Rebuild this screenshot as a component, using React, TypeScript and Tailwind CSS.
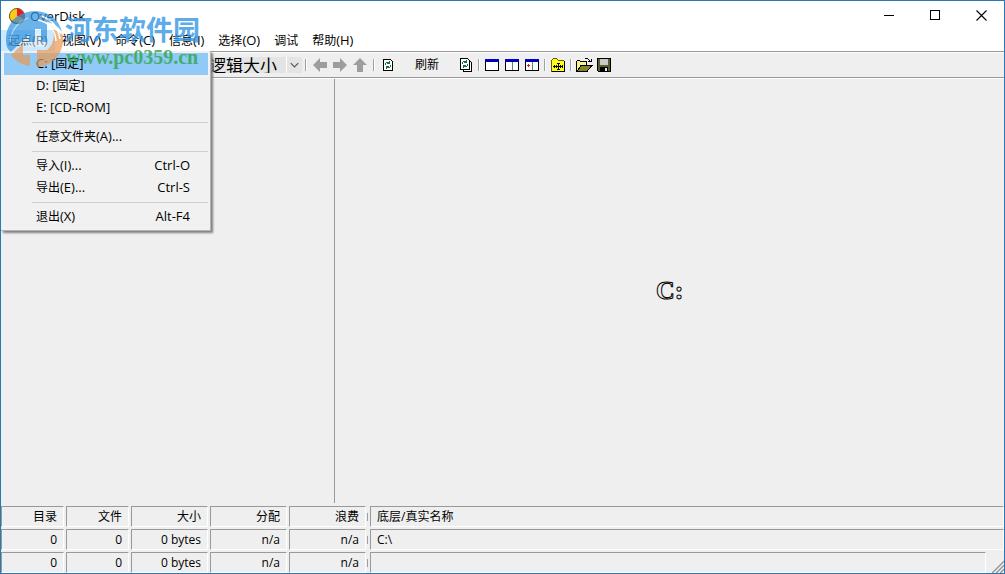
import React from 'react';

const drives = ['C: [固定]', 'D: [固定]', 'E: [CD-ROM]'];
const menus = ['起点(R)', '视图(V)', '命令(C)', '信息(I)', '选择(O)', '调试', '帮助(H)'];

function DiskLogo() {
  return (
    <svg width="18" height="18" viewBox="0 0 18 18" aria-hidden="true">
      <circle cx="9" cy="9" r="7.6" fill="#f8cc18" stroke="#7d5a16" />
      <path d="M9 9V1.5A7.5 7.5 0 0 1 15.5 12Z" fill="#e51f24" />
      <path d="M9 9 15.5 12A7.5 7.5 0 0 1 3.5 14Z" fill="#f5a51c" />
      <path d="M3.5 14A7.6 7.6 0 0 0 16.4 10.8" fill="none" stroke="#4a2a18" strokeWidth="1.2" />
    </svg>
  );
}

function Arrow({ direction }: { direction: 'left' | 'right' | 'up' }) {
  const d = {
    left: 'M3 10 10 3V7H17V13H10V17Z',
    right: 'M17 10 10 3V7H3V13H10V17Z',
    up: 'M10 3 17 10H13V17H7V10H3Z',
  }[direction];
  return (
    <svg width="20" height="20" viewBox="0 0 20 20" aria-hidden="true">
      <path d={d} fill="#9d9d9d" />
    </svg>
  );
}

function RefreshMarks() {
  return (
    <g fill="#16743a">
      <path d="M7 8H8V7H11V6H12V9H9V8H8V10H7Z" />
      <path d="M13 12H12V13H9V14H8V11H11V12H12V10H13Z" />
    </g>
  );
}

function RefreshPage() {
  return (
    <svg width="20" height="20" viewBox="0 0 20 20" shapeRendering="crispEdges" aria-hidden="true">
      <path d="M5.5 4.5H12.5L14.5 6.5V15.5H5.5Z" fill="#fff" stroke="#000" />
      <RefreshMarks />
    </svg>
  );
}

function RefreshPages() {
  return (
    <svg width="20" height="20" viewBox="0 0 20 20" shapeRendering="crispEdges" aria-hidden="true">
      <path d="M7.5 5.5H13.5L15.5 7.5V16.5H7.5Z" fill="#fff" stroke="#000" />
      <path d="M4.5 3.5H11.5L13.5 5.5V14.5H4.5Z" fill="#fff" stroke="#000" />
      <g transform="translate(-1 -1)">
        <RefreshMarks />
      </g>
    </svg>
  );
}

function Pane({ split, plus }: { split?: boolean; plus?: boolean }) {
  return (
    <svg width="20" height="20" viewBox="0 0 20 20" shapeRendering="crispEdges" aria-hidden="true">
      <path d="M3.5 4.5H16.5V15.5H3.5Z" fill="#fff" stroke="#000" />
      <path d="M3 4H17V7H3Z" fill="#0000b4" />
      {split && <path d="M10.5 7V15" stroke="#4c8a72" />}
      {plus && <path d="M5 10.5H8M6.5 9V12" stroke="#e01818" />}
    </svg>
  );
}

function MoveFolder() {
  return (
    <svg width="20" height="20" viewBox="0 0 20 20" shapeRendering="crispEdges" aria-hidden="true">
      <path d="M3.5 5.5 5.5 3.5H8.5L10.5 5.5H15.5L16.5 6.5V16.5H3.5Z" fill="#ffff1c" stroke="#5e5e00" />
      <path d="M16.5 6V16.5H4" fill="none" stroke="#000" />
      <path d="M5 11.5H15M10.5 8V15" stroke="#000" fill="none" />
      <path d="M9 8H12V9H9ZM9 14H12V15H9ZM6 10H7V13H6ZM14 10H15V13H14ZM8 10H9V13H8ZM12 10H13V13H12Z" fill="#000" />
    </svg>
  );
}

function OpenFolder() {
  return (
    <svg width="20" height="20" viewBox="0 0 20 20" shapeRendering="crispEdges" aria-hidden="true">
      <path d="M2.5 16.5V6.5L3.5 5.5H5.5L6.5 6.5H12.5V9.5" fill="#f5f58c" stroke="#000" />
      <path d="M3 16.5 7 10.5H18L13 16.5Z" fill="#84842a" stroke="#000" />
      <path d="M10.5 4.5 11.5 3.5H13.5L16.5 6.5M14 6.5H17.5V4" fill="none" stroke="#000" />
    </svg>
  );
}

function Floppy() {
  return (
    <svg width="20" height="20" viewBox="0 0 20 20" shapeRendering="crispEdges" aria-hidden="true">
      <path d="M3.5 3.5H16.5V16.5H4.5L3.5 15.5Z" fill="#5c5c2c" stroke="#000" />
      <path d="M6 4H14V10H6Z" fill="#c8c8c8" />
      <path d="M6 12H14V16H6Z" fill="#000" />
      <path d="M11 13H13V16H11Z" fill="#e8e8e8" />
    </svg>
  );
}

function Label({ text }: { text: string }) {
  const runs = text.match(/[\u4e00-\u9fff]+|[^\u4e00-\u9fff]+/g) ?? [];
  return (
    <span className="whitespace-pre">
      {runs.map((run, i) => (
        <span key={i} className={/[\u4e00-\u9fff]/.test(run) ? 'text-[12px]' : 'text-[13px]'}>
          {run}
        </span>
      ))}
    </span>
  );
}

function Tool({ label, children }: { label: string; children: React.ReactNode }) {
  return (
    <button type="button" aria-label={label} className="flex h-5 w-5 shrink-0 items-center justify-center">
      {children}
    </button>
  );
}

function Rule({ tight }: { tight?: boolean }) {
  return <span className={`h-3 w-[2px] shrink-0 border-l border-[#a0a0a0] bg-white ${tight ? 'mx-[2px]' : 'mx-[3px]'}`} />;
}

function Entry({ label, keys, active }: { label: string; keys?: string; active?: boolean }) {
  return (
    <button
      type="button"
      role="menuitem"
      className={`flex h-[22px] w-full items-center justify-between pr-[18px] pb-[2px] pl-8 ${active ? 'bg-[#91c9f7]' : ''}`}
    >
      <Label text={label} />
      {keys && <Label text={keys} />}
    </button>
  );
}

function MenuRule() {
  return <div role="separator" className="my-[3px] ml-7 h-px bg-[#d0d0d0]" />;
}

function StartMenu() {
  return (
    <div
      role="menu"
      className="absolute top-full left-0 z-10 w-[210px] border-r border-b border-[#b4b4b4] bg-[#f1f1f1] py-[2px] pr-[2px] pl-[3px] shadow-[2px_2px_2px_#808080]"
    >
      {drives.map((d, i) => (
        <Entry key={d} label={d} active={i === 0} />
      ))}
      <MenuRule />
      <Entry label="任意文件夹(A)..." />
      <MenuRule />
      <Entry label="导入(I)..." keys="Ctrl-O" />
      <Entry label="导出(E)..." keys="Ctrl-S" />
      <MenuRule />
      <Entry label="退出(X)" keys="Alt-F4" />
    </div>
  );
}

function Watermark() {
  return (
    <div className="pointer-events-none absolute top-2 left-1 z-20 flex">
      <svg width="60" height="60" viewBox="0 0 60 60" className="opacity-70" aria-hidden="true">
        <path d="M1 31C1 13 14 2 31 2C45 3 54 11 57 23C53 17 48 14 42 13V33H36V20H30V33H24V25L6 43C2 40 1 36 1 31Z" fill="#2f94e0" />
        <path d="M58 26C60 43 48 57 32 58V41H42C47 37 50 30 48 20C52 22 55 24 58 26Z" fill="#e99a55" />
        <path d="M6 46 18 35V46H25V57C17 56 10 52 6 46Z" fill="#e99a55" />
        <path d="M30 22H36V33H42V38H20L24 33H30Z" fill="#fff" opacity=".5" />
        <path d="M36 7C46 10 53 17 55 30M33 11C43 13 50 20 51 32" fill="none" stroke="#fff" strokeWidth="1.5" />
        <path d="M5 33C6 22 13 12 23 9" fill="none" stroke="#fff" strokeWidth="1.2" opacity=".6" />
      </svg>
      <div className="flex flex-col whitespace-nowrap opacity-80">
        <span className="mt-1 h-8 font-['Noto_Sans_CJK_SC',sans-serif] text-[27px] leading-8 font-bold text-[#3498e5]">河东软件园</span>
        <span className="h-6 pl-px font-['Liberation_Serif',serif] text-[20px] leading-6 font-bold text-[#2fa84b]">www.pc0359.cn</span>
      </div>
    </div>
  );
}

function Cell({ children, left }: { children?: React.ReactNode; left?: boolean }) {
  return (
    <div
      className={`h-[21px] grow border-t border-l border-t-[#999] border-l-[#999] border-r border-b border-r-white border-b-white px-[6px] leading-5 ${left ? 'text-left' : 'text-right'}`}
    >
      {children}
    </div>
  );
}

const rows = [
  ['0', '0', '0 bytes', 'n/a', 'n/a', 'C:\\'],
  ['0', '0', '0 bytes', 'n/a', 'n/a', ''],
];

function StatusContent({ value, index, last }: { value: string; index: number; last?: boolean }) {
  return (
    <div className={`flex ${index < 5 ? 'pr-[2px]' : ''} ${last ? '' : 'pb-[2px]'}`}>
      <Cell left={index === 5}>{value}</Cell>
      {index === 4 && <span className="ml-px h-2 w-px self-center bg-[#a0a0a0]" />}
      {index === 5 && last && (
        <svg width="18" height="21" viewBox="0 0 18 21" className="shrink-0" aria-hidden="true">
          <path d="M6 21 18 9M10 21 18 13M14 21 18 17" stroke="#999" strokeWidth="1.8" />
          <path d="M4.5 21 18 7.5M8.5 21 18 11.5M12.5 21 18 15.5" stroke="#fff" />
        </svg>
      )}
    </div>
  );
}

function StatusTable() {
  return (
    <table className="w-full table-fixed border-collapse">
      <colgroup>
        <col className="w-[65px]" />
        <col className="w-[65px]" />
        <col className="w-[79px]" />
        <col className="w-[79px]" />
        <col className="w-[81px]" />
        <col />
      </colgroup>
      <thead>
        <tr>
          {['目录', '文件', '大小', '分配', '浪费', '底层/真实名称'].map((h, i) => (
            <th key={h} scope="col" className="p-0 font-normal">
              <StatusContent value={h} index={i} />
            </th>
          ))}
        </tr>
      </thead>
      <tbody>
        {rows.map((row, r) => (
          <tr key={r}>
            {row.map((v, i) => (
              <td key={i} className="p-0">
                <StatusContent value={v} index={i} last={r === 1} />
              </td>
            ))}
          </tr>
        ))}
      </tbody>
    </table>
  );
}

export default function App() {
  return (
    <div className="relative flex h-screen w-full flex-col overflow-hidden border border-[#2878b8] bg-[#efefef] font-['Open_Sans','Noto_Sans_CJK_SC',sans-serif] text-[12px] leading-4 text-black">
      <header className="flex h-[29px] shrink-0 items-center bg-white pl-[7px]">
        <DiskLogo />
        <h1 className="grow pl-1 text-[13px]">OverDisk</h1>
        <button type="button" aria-label="最小化" className="flex h-full w-[46px] items-center justify-center">
          <svg width="11" height="11" viewBox="0 0 11 11" shapeRendering="crispEdges"><path d="M0 5.5H10" stroke="#000" /></svg>
        </button>
        <button type="button" aria-label="最大化" className="flex h-full w-[46px] items-center justify-center">
          <svg width="11" height="11" viewBox="0 0 11 11" shapeRendering="crispEdges"><path d="M.5.5H9.5V9.5H.5Z" fill="none" stroke="#000" /></svg>
        </button>
        <button type="button" aria-label="关闭" className="flex h-full w-[46px] items-center justify-center">
          <svg width="11" height="11" viewBox="0 0 11 11"><path d="M.5.5 10.5 10.5M10.5.5.5 10.5" stroke="#000" strokeWidth="1.1" /></svg>
        </button>
      </header>

      <nav className="relative flex h-[21px] shrink-0 bg-white">
        {menus.map((m, i) => (
          <button key={m} type="button" className={`px-[7px] ${i === 0 ? 'bg-[#cce8ff] text-[#444]' : ''}`}>
            <Label text={m} />
          </button>
        ))}
        <StartMenu />
      </nav>

      <div className="flex h-[27px] shrink-0 items-center border-t border-b border-[#999] shadow-[inset_0_1px_0_#fff,0_1px_0_#fff]">
        <div className="relative ml-[128px] h-4 w-[173px] bg-[#e4e4e4]">
          <select
            aria-label="大小类型"
            className="block h-4 w-full appearance-none pl-20 text-[17px] leading-4 font-['Noto_Sans_CJK_SC',sans-serif]"
          >
            <option>逻辑大小</option>
          </select>
          <svg width="16" height="16" viewBox="0 0 16 16" className="pointer-events-none absolute top-0 right-0 border-l border-white" aria-hidden="true">
            <path d="M4 6 8 10 12 6" fill="none" stroke="#555" strokeWidth="1.3" />
          </svg>
        </div>
        <Rule />
        <Tool label="后退"><Arrow direction="left" /></Tool>
        <Tool label="前进"><Arrow direction="right" /></Tool>
        <Tool label="向上"><Arrow direction="up" /></Tool>
        <Rule />
        <Tool label="刷新当前"><RefreshPage /></Tool>
        <button type="button" className="h-5 w-[58px]">刷新</button>
        <Tool label="全部刷新"><RefreshPages /></Tool>
        <Rule tight />
        <Tool label="单窗格"><Pane /></Tool>
        <Tool label="双窗格"><Pane split /></Tool>
        <Tool label="树形窗格"><Pane split plus /></Tool>
        <Rule tight />
        <Tool label="移动文件夹"><MoveFolder /></Tool>
        <Rule tight />
        <Tool label="打开"><OpenFolder /></Tool>
        <Tool label="保存"><Floppy /></Tool>
      </div>

      <main className="flex min-h-0 grow pt-px">
        <aside className="w-1/3 shrink-0 border-r border-[#999]" />
        <section className="flex grow items-center justify-center">
          <span className="font-['Liberation_Serif',serif] text-[26px] leading-8 font-bold text-[#efefef] [-webkit-text-stroke:1px_#000]">C:</span>
        </section>
      </main>

      <footer className="shrink-0 pt-[3px]">
        <StatusTable />
      </footer>
      <Watermark />
    </div>
  );
}
